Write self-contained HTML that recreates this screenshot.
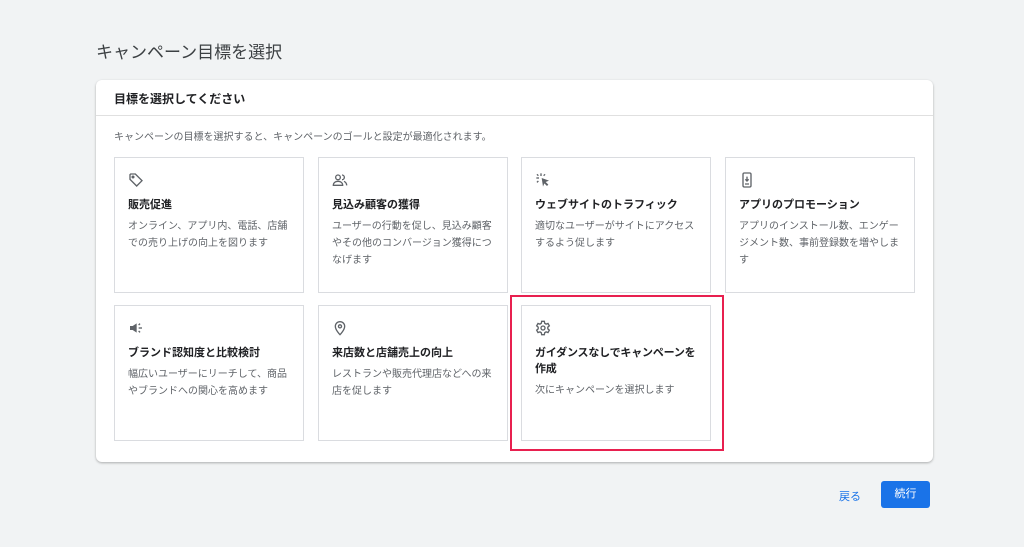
<!DOCTYPE html>
<html><head><meta charset="utf-8"><style>
*{margin:0;padding:0;box-sizing:border-box}
body{width:1024px;height:547px;background:#f1f3f4;font-family:"Liberation Sans","Noto Sans CJK JP",sans-serif;color:#3c4043;position:relative;overflow:hidden}
h1{position:absolute;left:96px;top:38px;font-size:17px;font-weight:400;color:#3c4043}
.panel{position:absolute;left:96px;top:80px;width:837px;height:382px;background:#fff;border-radius:6px;box-shadow:0 1px 2px rgba(0,0,0,.2),0 1px 3px rgba(0,0,0,.1)}
.hd{height:36px;border-bottom:1px solid #e0e0e0;padding:10px 0 0 18px;font-size:12px;font-weight:700;color:#202124}
.desc{position:absolute;left:18px;top:48px;font-size:10px;color:#5f6368}
.card{position:absolute;width:190px;height:136px;border:1.5px solid #dadce0;padding:14px 6px 0 13px}
.card svg{display:block;width:16px;height:16px;margin-bottom:9px}
.t{font-size:11px;font-weight:700;color:#202124;line-height:16px;margin-bottom:5px}
.d{font-size:10px;color:#5f6368;line-height:17px;padding-right:6px}
.red{position:absolute;left:510px;top:295px;width:214px;height:156px;border:2px solid #e8204f}
.back{position:absolute;left:839px;top:488px;font-size:11px;color:#1a73e8}
.btn{position:absolute;left:881px;top:481px;width:49px;height:27px;background:#1a73e8;color:#fff;border-radius:3px;font-size:11px;text-align:center;line-height:27px}
</style></head><body>
<h1>キャンペーン目標を選択</h1>
<div class="panel">
<div class="hd">目標を選択してください</div>
<div class="desc">キャンペーンの目標を選択すると、キャンペーンのゴールと設定が最適化されます。</div>
<div class="card" style="left:18px;top:77px"><svg viewBox="0 0 24 24" fill="none" stroke="#5f6368" stroke-width="2"><path d="M3 4v7l10 10 8-8L11 3H4z"/><circle cx="7.5" cy="7.5" r="1.3" fill="#5f6368"/></svg><div class="t">販売促進</div><div class="d">オンライン、アプリ内、電話、店舗での売り上げの向上を図ります</div></div>
<div class="card" style="left:222px;top:77px"><svg viewBox="0 0 24 24" fill="none" stroke="#5f6368" stroke-width="2"><circle cx="9" cy="8" r="3.5"/><path d="M2 20c0-4 3-6 7-6s7 2 7 6z"/><path d="M15 4.5a3.5 3.5 0 010 7M18 14c2 1 4 3 4 6"/></svg><div class="t">見込み顧客の獲得</div><div class="d">ユーザーの行動を促し、見込み顧客やその他のコンバージョン獲得につなげます</div></div>
<div class="card" style="left:425px;top:77px"><svg viewBox="0 0 24 24" fill="#5f6368"><path d="M10 9l11 4-5 2 4 4-2 2-4-4-2 5z"/><rect x="8" y="2" width="2" height="4"/><rect x="2" y="8" width="4" height="2"/><rect x="3" y="3" width="2" height="3" transform="rotate(-45 4 4.5)"/><rect x="13" y="3" width="2" height="3" transform="rotate(45 14 4.5)"/><rect x="3" y="13" width="2" height="3" transform="rotate(45 4 14.5)"/></svg><div class="t">ウェブサイトのトラフィック</div><div class="d">適切なユーザーがサイトにアクセスするよう促します</div></div>
<div class="card" style="left:629px;top:77px"><svg viewBox="0 0 24 24" fill="none" stroke="#5f6368" stroke-width="2"><rect x="6" y="1.5" width="12" height="21" rx="2"/><path d="M12 7v6M9.5 11l2.5 2.5 2.5-2.5M9 18h6"/></svg><div class="t">アプリのプロモーション</div><div class="d">アプリのインストール数、エンゲージメント数、事前登録数を増やします</div></div>
<div class="card" style="left:18px;top:225px"><svg viewBox="0 0 24 24" fill="#5f6368"><path d="M3 9h4l6-4v14l-6-4H3z"/><rect x="16" y="11" width="5" height="2"/><rect x="16" y="5" width="2" height="3" transform="rotate(45 17 6.5)"/><rect x="16" y="16" width="2" height="3" transform="rotate(-45 17 17.5)"/></svg><div class="t">ブランド認知度と比較検討</div><div class="d">幅広いユーザーにリーチして、商品やブランドへの関心を高めます</div></div>
<div class="card" style="left:222px;top:225px"><svg viewBox="0 0 24 24" fill="none" stroke="#5f6368" stroke-width="2"><path d="M12 22s7-7 7-12.5a7 7 0 00-14 0C5 15 12 22 12 22z"/><circle cx="12" cy="9.5" r="2.3"/></svg><div class="t">来店数と店舗売上の向上</div><div class="d">レストランや販売代理店などへの来店を促します</div></div>
<div class="card" style="left:425px;top:225px;padding-top:14px"><svg viewBox="0 0 24 24" fill="none" stroke="#5f6368" stroke-width="2"><path d="M10 2h4l.6 3 2 1.2 2.9-1 2 3.5-2.3 2v2.6l2.3 2-2 3.5-2.9-1-2 1.2L14 22h-4l-.6-3-2-1.2-2.9 1-2-3.5 2.3-2v-2.6l-2.3-2 2-3.5 2.9 1 2-1.2z"/><circle cx="12" cy="12" r="3"/></svg><div class="t" style="letter-spacing:-0.2px">ガイダンスなしでキャンペーンを<br>作成</div><div class="d">次にキャンペーンを選択します</div></div>
</div>
<div class="red"></div>
<div class="back">戻る</div>
<div class="btn">続行</div>
</body></html>
